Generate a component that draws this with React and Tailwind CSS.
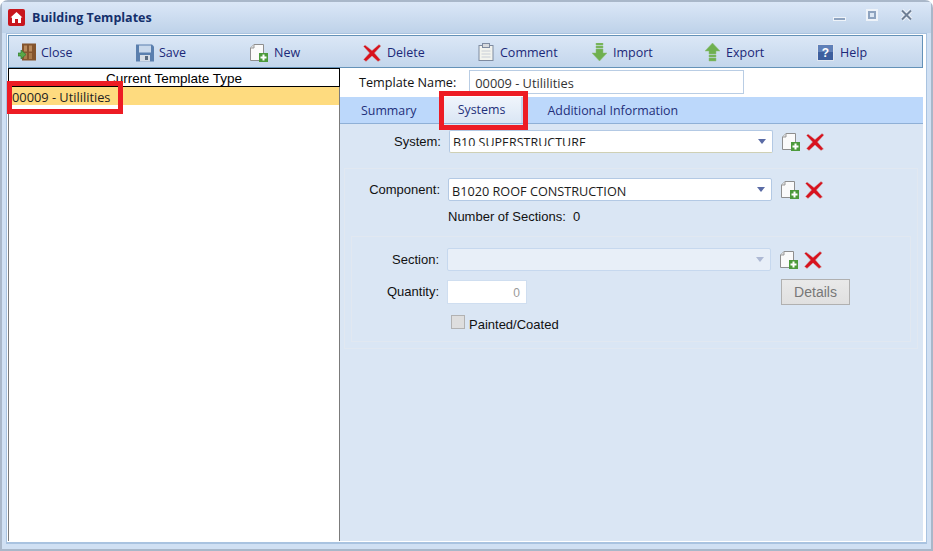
import React from 'react';

const uiFont = "[font-family:'Open_Sans','Noto_Sans',sans-serif]";

const DoorIcon = () => (
  <svg width="20" height="20" viewBox="0 0 20 20">
    <rect x="4" y="0.500" width="14" height="17" fill="#84552e" />
    <rect x="6" y="2.500" width="3" height="6" fill="#b98a5c" />
    <rect x="11" y="2.500" width="3" height="6" fill="#b98a5c" />
    <rect x="6" y="10" width="3" height="6" fill="#a87a4c" />
    <rect x="11" y="10" width="3" height="6" fill="#a87a4c" />
    <path d="M0 10h3V7l5 4.500L3 16v-3H0z" fill="#58a948" stroke="#2f7a35" strokeWidth="0.7" />
  </svg>
);

const SaveIcon = () => (
  <svg width="18" height="18" viewBox="0 0 18 18">
    <path d="M0 0.500h16l2 2V17.500H0z" fill="#5a7fae" />
    <rect x="3" y="1.500" width="12" height="7" fill="#c9d9ec" />
    <rect x="4" y="11" width="10" height="6.500" fill="#d6dde6" />
    <rect x="9" y="12" width="3" height="4" fill="#5a6b80" />
  </svg>
);

const NewIcon = () => (
  <svg width="18" height="18" viewBox="0 0 18 18">
    <path d="M0.500 4 4 0.500h9.500v16H0.500z" fill="#fafafa" stroke="#8e8e8e" />
    <path d="M4 0.500V4H0.500" fill="#dddddd" stroke="#9a9a9a" />
    <rect x="9" y="9" width="9" height="9" fill="#4c9a3c" />
    <path d="M13.500 10.500v6M10.500 13.500h6" stroke="#ffffff" strokeWidth="2" />
  </svg>
);

const CrossIcon = () => (
  <svg width="18" height="18" viewBox="0 0 18 18">
    <path d="M2 1 9 6.500 16 0.500 18 2 11.500 9 17.500 16 15 17.500 9 12 3 17.500 0.500 15.500 6.500 9 0.500 2.500z" fill="#d8121e" stroke="#c9b4b4" strokeWidth="0.5" />
  </svg>
);

const ClipboardIcon = () => (
  <svg width="16" height="19" viewBox="0 0 16 19">
    <rect x="1" y="2.500" width="14" height="15" fill="#f2f3ee" stroke="#7f8ba0" />
    <rect x="4.500" y="0.500" width="7" height="4" fill="#d7dade" stroke="#7f8ba0" />
    <path d="M3.500 8h9M3.500 11h9M3.500 14h9" stroke="#c8ced8" />
  </svg>
);

const ImportIcon = () => (
  <svg width="15" height="19" viewBox="0 0 15 19">
    <path d="M4 0h7v2H4zM4 3h7v2H4zM4 6h7v4h4l-7.500 8L0 10h4z" fill="#6fb04f" stroke="#8ebf7a" strokeWidth="0.5" />
  </svg>
);

const ExportIcon = () => (
  <svg width="15" height="19" viewBox="0 0 15 19">
    <path d="M7.500 0 15 8h-4v3H4V8H0zM4 12h7v2H4zM4 15h7v3H4z" fill="#6fb04f" stroke="#8ebf7a" strokeWidth="0.5" />
  </svg>
);

const HelpIcon = () => (
  <svg width="17" height="17" viewBox="0 0 17 17">
    <rect x="0.500" y="0.500" width="16" height="16" fill="#3d5f9e" stroke="#dfe6f0" />
    <rect x="1" y="1" width="15" height="7" fill="#5f80b8" />
    <text x="8.500" y="13" textAnchor="middle" fontSize="12" fontWeight="700" fill="#ffffff" fontFamily="Liberation Sans">?</text>
  </svg>
);

const toolbarItems = [
  { label: 'Close', icon: <DoorIcon />, itemWidth: 'w-[118px]', iconWidth: 'w-[23px]' },
  { label: 'Save', icon: <SaveIcon />, itemWidth: 'w-[114px]', iconWidth: 'w-[23px]' },
  { label: 'New', icon: <NewIcon />, itemWidth: 'w-[113px]', iconWidth: 'w-[24px]' },
  { label: 'Delete', icon: <CrossIcon />, itemWidth: 'w-[115px]', iconWidth: 'w-[24px]' },
  { label: 'Comment', icon: <ClipboardIcon />, itemWidth: 'w-[114px]', iconWidth: 'w-[22px]' },
  { label: 'Import', icon: <ImportIcon />, itemWidth: 'w-[113px]', iconWidth: 'w-[21px]' },
  { label: 'Export', icon: <ExportIcon />, itemWidth: 'w-[112px]', iconWidth: 'w-[21px]' },
  { label: 'Help', icon: <HelpIcon />, itemWidth: 'w-[60px]', iconWidth: 'w-[23px]' },
];

const Combo = ({ children, disabled, clip }) => (
  <div
    className={`w-[324px] h-[23px] flex items-center border rounded-[2px] pl-[3px] ${
      disabled ? 'bg-[#e8eff8] border-[#c6d8ee]' : 'bg-white border-[#b3c9e4]'
    } ${clip ? 'border-b-[#cfd0b4]' : ''}`}
  >
    <span
      className={`flex-1 ${uiFont} text-[#1c1c1c] ${
        clip ? 'self-start mt-[5px] h-[10px] overflow-hidden text-[12.500px] leading-[14px]' : 'mt-[2px] text-[12.700px] leading-[16px]'
      }`}
    >
      {children}
    </span>
    <span className={`mr-[6px] w-0 h-0 border-x-[4px] border-x-transparent border-t-[5px] ${disabled ? 'border-t-[#aeb9d4]' : 'border-t-[#5a6ba5]'}`} />
  </div>
);

const ActionIcons = () => (
  <div className="flex items-center gap-[6px] ml-[9px]">
    <NewIcon />
    <CrossIcon />
  </div>
);

const Label = ({ children, className = '' }) => (
  <span className={`text-[13px] text-right text-[#111] ${className}`}>{children}</span>
);

export default function App() {
  return (
    <div className="relative w-[933px] h-[551px] flex flex-col bg-white overflow-hidden font-['Liberation_Sans',sans-serif]">
      <div className="flex-1 flex flex-col border-2 border-[#a9b7c9] rounded-t-[8px] bg-[#d0e0f3]">
        {/* Title bar */}
        <div className="h-[31px] shrink-0 flex items-center pl-[6px] pr-[18px] bg-gradient-to-b from-[#dbe7f7] to-[#bed2e9]">
          <div className="w-[17px] h-[17px] rounded-[2px] bg-[#c8161d] flex items-center justify-center">
            <svg width="13" height="13" viewBox="0 0 13 13">
              <path d="M6.500 1 12.500 6.500H11V12H2V6.500H.5z" fill="#ffffff" />
              <rect x="5" y="8" width="3" height="4" fill="#c8161d" />
            </svg>
          </div>
          <span className={`ml-[7px] mt-[1px] text-[12.500px] font-bold text-[#14306c] ${uiFont}`}>Building Templates</span>
          <div className="ml-auto flex items-center mb-[3px]">
            <span className="w-[13px] h-[4px] mt-[5px] bg-[#8ea3bf] border border-[#eef3f9]" />
            <span className="ml-[20px] w-[12px] h-[12px] border-2 border-[#eef3f9] bg-[#8ea3bf] p-[2px] mb-[2px]">
              <span className="block w-full h-full bg-[#dce7f4]" />
            </span>
            <svg className="ml-[22px] mb-[2px]" width="13" height="12" viewBox="0 0 13 12">
              <path d="M2 1.500 11 10.500M11 1.500 2 10.500" stroke="#eef3f9" strokeWidth="4" />
              <path d="M2 1.500 11 10.500M11 1.500 2 10.500" stroke="#6f7f95" strokeWidth="2" />
            </svg>
          </div>
        </div>

        {/* Window body */}
        <div className="flex-1 flex flex-col mx-[4px] mb-[5px] border-x border-t border-b-2 border-[#a9c3e0]">
          <div className="flex-1 flex flex-col border-t border-l border-r-[3px] border-b border-white bg-white">
            {/* Toolbar */}
            <div className="h-[33px] shrink-0 flex items-center pl-[9px] pt-[2px] border border-[#6492b8] bg-gradient-to-b from-[#dbe7f6] to-[#c3d6ec]">
              {toolbarItems.map((item) => (
                <div key={item.label} className={`${item.itemWidth} flex items-center`}>
                  <span className={`${item.iconWidth} flex`}>{item.icon}</span>
                  <span className={`mt-[1px] text-[12.500px] text-[#1b2878] ${uiFont}`}>{item.label}</span>
                </div>
              ))}
            </div>

            <div className="flex-1 flex min-h-0">
              {/* Template list */}
              <div className="w-[332px] shrink-0 flex flex-col bg-white border-l border-r border-[#7b7b7b]">
                <div className="h-[19px] border border-black -ml-px -mr-px text-center text-[13.500px] leading-[19px] text-black">
                  Current Template Type
                </div>
                <div className={`h-[18px] bg-[#fedb7f] pl-[3px] text-[12.800px] leading-[21px] text-[#222] ${uiFont}`}>
                  00009 - Utililities
                </div>
              </div>

              {/* Detail panel */}
              <div className="flex-1 flex flex-col bg-[#dae6f4]">
                <div className="h-[29px] shrink-0 flex items-start pt-[2px] pl-[19px] bg-white">
                  <span className={`text-[12.650px] leading-[24px] text-[#111] ${uiFont}`}>Template Name:</span>
                  <div className={`ml-[13px] w-[275px] h-[24px] border border-[#b9cde4] pl-[5px] text-[12.800px] leading-[25px] text-[#333] ${uiFont}`}>
                    00009 - Utililities
                  </div>
                </div>

                <div className={`h-[27px] shrink-0 flex items-end bg-[#bcd8fb] border-b border-[#8fb0d6] text-[12.400px] text-[#1f2f7a] ${uiFont}`}>
                  <span className="ml-[21px] h-[25px] leading-[25px]">Summary</span>
                  <span className="ml-[26px] w-[80px] h-[26px] text-center leading-[26px] bg-gradient-to-b from-[#f0f5fc] to-[#dae6f4] border-r-2 border-[#c3d6ee]">
                    Systems
                  </span>
                  <span className="ml-[25px] h-[25px] leading-[25px]">Additional Information</span>
                </div>

                <div className="flex-1 flex flex-col pl-[4px] pr-[5px] pt-[6px]">
                  <div className="flex items-center">
                    <Label className="w-[97px]">System:</Label>
                    <div className="ml-[8px]">
                      <Combo clip>B10 SUPERSTRUCTURE</Combo>
                    </div>
                    <ActionIcons />
                  </div>

                  <div className="mt-[15px] h-[181px] border border-[#e1e8f1] pt-[9px] pr-[6px] pl-[6px]">
                    <div className="flex items-center">
                      <Label className="w-[89px]">Component:</Label>
                      <div className="ml-[8px]">
                        <Combo>B1020 ROOF CONSTRUCTION</Combo>
                      </div>
                      <ActionIcons />
                    </div>
                    <div className="mt-[8px] ml-[97px] text-[13px] leading-[16px] text-[#111]">
                      Number of Sections:&nbsp; 0
                    </div>

                    <div className="mt-[11px] h-[106px] border border-[#e1e8f1] pt-[11px]">
                      <div className="flex items-center">
                        <Label className="w-[87px] mt-[1px]">Section:</Label>
                        <div className="ml-[8px]">
                          <Combo disabled />
                        </div>
                        <ActionIcons />
                      </div>
                      <div className="mt-[9px] flex items-start">
                        <Label className="w-[87px] leading-[23px]">Quantity:</Label>
                        <div className="ml-[8px] w-[80px] h-[24px] bg-white border border-[#cfdef0] pr-[6px] text-right text-[12px] leading-[25px] text-[#9a9a9a]">
                          0
                        </div>
                        <button className="ml-[254px] -mt-px w-[69px] h-[26px] bg-gradient-to-b from-[#e9e9e9] to-[#e0e0e0] border border-[#b0b0b0] text-[14px] text-[#777]">
                          Details
                        </button>
                      </div>
                      <div className="mt-[10px] ml-[99px] flex items-start">
                        <span className="w-[14px] h-[14px] bg-[#dedede] border border-[#b2b2b2]" />
                        <span className="ml-[4px] mt-[2px] text-[13px] leading-[15px] text-[#111]">Painted/Coated</span>
                      </div>
                    </div>
                  </div>
                </div>
              </div>
            </div>
          </div>
        </div>
      </div>

      {/* Red annotation boxes drawn over the window */}
      <div className="absolute left-[7px] top-[81px] w-[116px] h-[33px] border-[5px] border-[#ed1c24]" />
      <div className="absolute left-[439px] top-[91px] w-[89px] h-[39px] border-[5px] border-[#ed1c24]" />
    </div>
  );
}
